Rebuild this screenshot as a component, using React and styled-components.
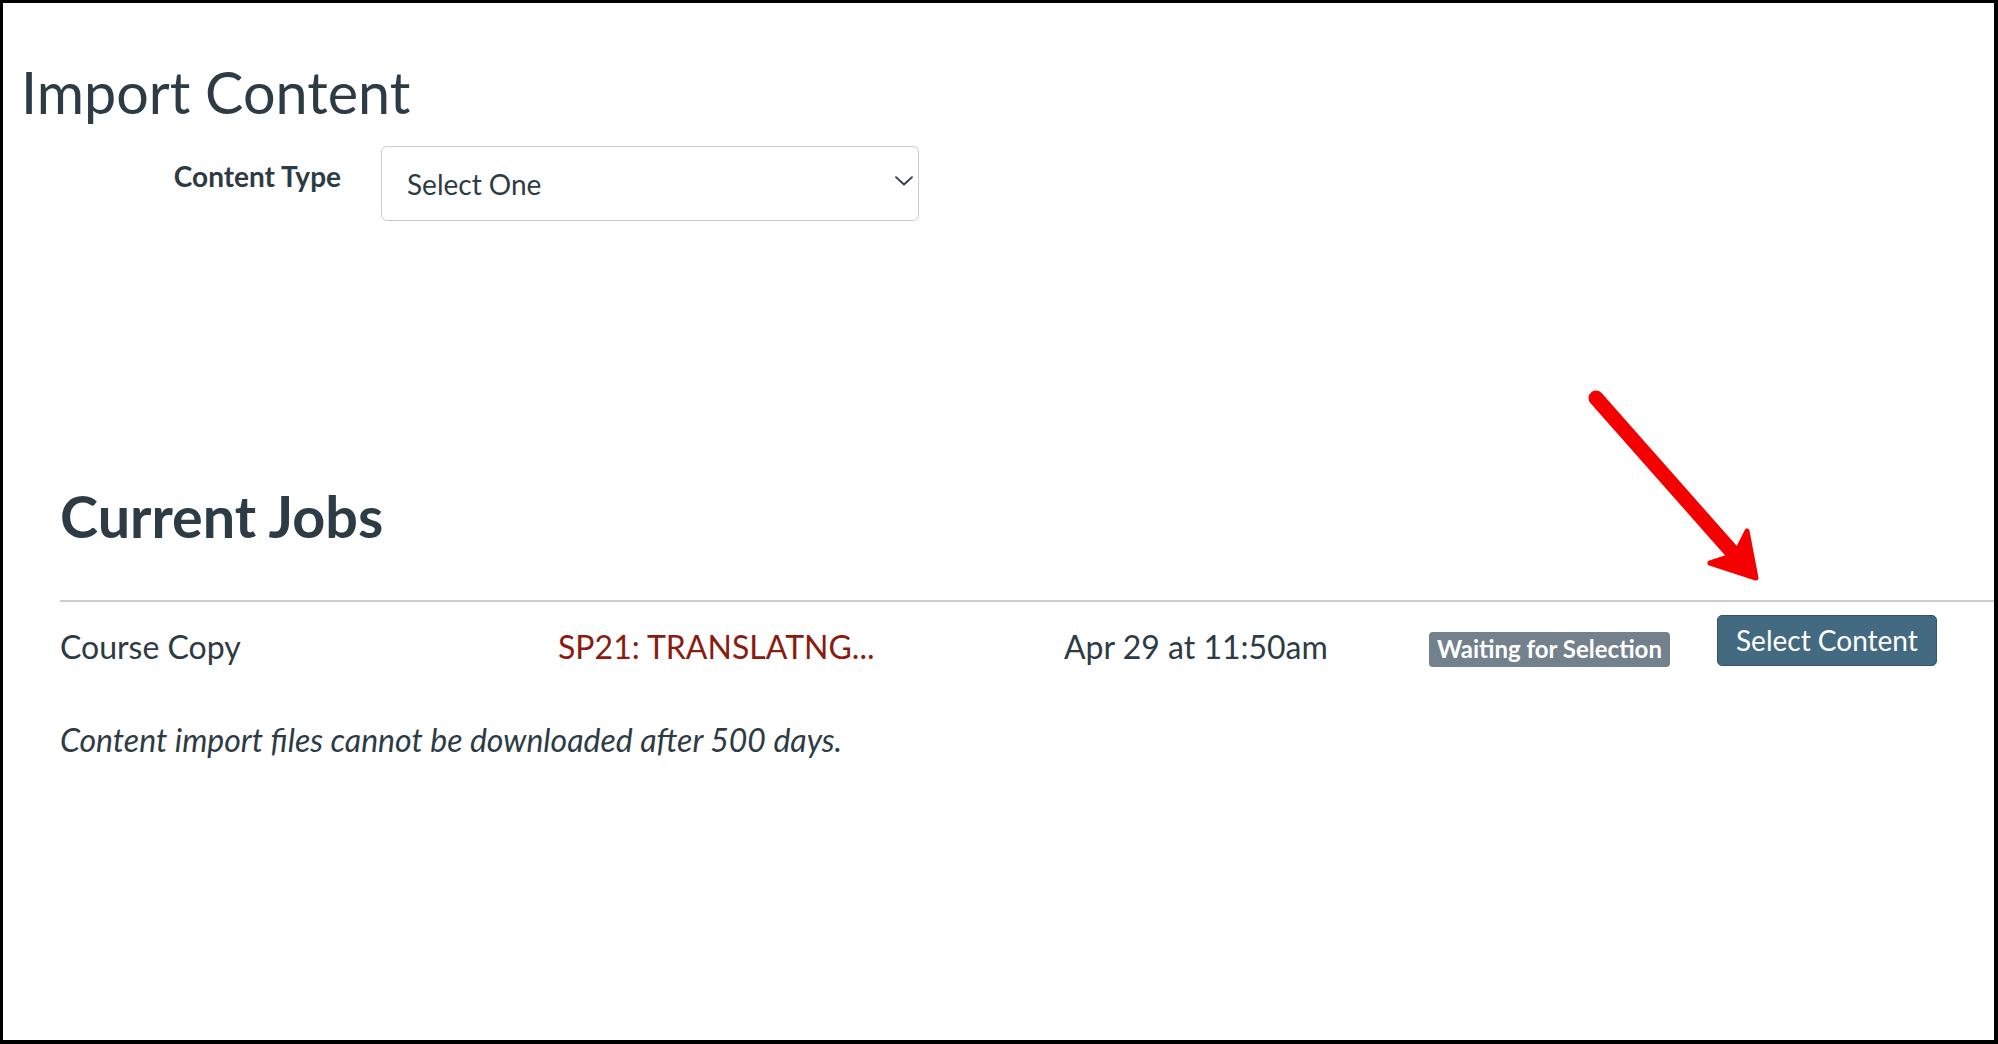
import React from 'react'
import styled, { createGlobalStyle } from 'styled-components'

const GlobalStyle = createGlobalStyle`
  html, body {
    margin: 0;
    padding: 0;
    background: #ffffff;
  }
  body {
    font-family: Lato, "Open Sans", "Liberation Sans", sans-serif;
    color: #2d3b45;
  }
`

const jobs = [
  {
    type: 'Course Copy',
    source: 'SP21: TRANSLATNG...',
    date: 'Apr 29 at 11:50am',
    status: 'Waiting for Selection',
  },
]

const App = () => {
  return (
    <>
      <GlobalStyle />
      <Frame>
        <Title>Import Content</Title>
        <FormRow>
          <FieldLabel>Content Type</FieldLabel>
          <SelectBox role="combobox" aria-expanded="false">
            <span>Select One</span>
            <svg width="18" height="10" viewBox="0 0 18 10" fill="none">
              <path d="M1 1.2 L9 8.5 L17 1.2" stroke="#2d3b45" strokeWidth="1.8" strokeLinecap="round" strokeLinejoin="round" />
            </svg>
          </SelectBox>
        </FormRow>

        <JobsSection>
          <SectionTitle>Current Jobs</SectionTitle>
          <JobsTable>
            {jobs.map((job) => (
              <JobRow key={job.source}>
                <Cell offset={13}>{job.type}</Cell>
                <Cell offset={13}>
                  <SourceLink href="#">{job.source}</SourceLink>
                </Cell>
                <Cell offset={13}>{job.date}</Cell>
                <Cell offset={17}>
                  <Badge>{job.status}</Badge>
                </Cell>
                <Cell offset={0}>
                  <PrimaryButton>Select Content</PrimaryButton>
                </Cell>
              </JobRow>
            ))}
          </JobsTable>
          <Note>Content import files cannot be downloaded after 500 days.</Note>
        </JobsSection>

        <Arrow viewBox="0 0 220 220" width="220" height="220">
          <line x1="26" y1="18" x2="163" y2="173" stroke="#f40000" strokeWidth="15" strokeLinecap="round" />
          <path
            d="M177 151 L186 198 L140 183 L165 175 Z"
            fill="#f40000"
            stroke="#f40000"
            strokeWidth="5"
            strokeLinejoin="round"
          />
        </Arrow>
      </Frame>
    </>
  )
}

export default App

const Frame = styled.div`
  position: relative;
  box-sizing: border-box;
  width: 1998px;
  height: 1044px;
  border-style: solid;
  border-color: #000000;
  border-width: 3px 4px 4px 3px;
  padding: 54px 0 0 18px;
  overflow: hidden;
`

const Title = styled.h1`
  margin: 0;
  font-size: 57.5px;
  font-weight: 400;
  line-height: 1.2;
  color: #2d3b45;
`

const FormRow = styled.div`
  display: grid;
  grid-template-columns: 320px 538px;
  column-gap: 40px;
  align-items: start;
  margin-top: 20px;
`

const FieldLabel = styled.label`
  padding-top: 14px;
  text-align: right;
  font-size: 28px;
  font-weight: 700;
  line-height: 1.2;
`

const SelectBox = styled.div`
  box-sizing: border-box;
  display: flex;
  align-items: center;
  justify-content: space-between;
  height: 75px;
  padding: 3px 5px 0 25px;
  border: 1px solid #c7cdd1;
  border-radius: 6px;
  font-size: 28px;
  line-height: 1.2;
  color: #2d3b45;

  svg {
    margin-top: -8px;
  }
`

const JobsSection = styled.section`
  margin: 260px 0 0 39px;
`

const SectionTitle = styled.h2`
  margin: 0;
  font-size: 57.5px;
  font-weight: 700;
  line-height: 1.2;
  color: #2d3b45;
`

const JobsTable = styled.div`
  margin-top: 50px;
  border-top: 2px solid #c7cdd1;
`

const JobRow = styled.div`
  display: grid;
  grid-template-columns: 498px 506px 365px 288px auto;
  align-items: start;
  padding-top: 13px;
`

const Cell = styled.div`
  display: flex;
  align-items: flex-start;
  margin-top: ${(p) => p.offset}px;
  font-size: 32px;
  line-height: 1.2;
  white-space: nowrap;
`

const SourceLink = styled.a`
  color: #8b1a10;
  text-decoration: none;
`

const Badge = styled.span`
  display: inline-block;
  padding: 3px 8px;
  border-radius: 4px;
  background: #73818c;
  color: #ffffff;
  font-size: 24px;
  font-weight: 700;
  line-height: 1.2;
`

const PrimaryButton = styled.button`
  box-sizing: border-box;
  height: 51px;
  padding: 0 18px;
  border: 1px solid #355669;
  border-radius: 5px;
  background: #436a80;
  color: #ffffff;
  font-family: Lato, "Open Sans", "Liberation Sans", sans-serif;
  font-size: 28px;
  line-height: 1.2;
  cursor: pointer;
`

const Note = styled.p`
  margin: 54px 0 0;
  font-size: 32px;
  font-style: italic;
  line-height: 1.2;
  color: #2d3b45;
`

const Arrow = styled.svg`
  position: absolute;
  left: 1567px;
  top: 377px;
`
